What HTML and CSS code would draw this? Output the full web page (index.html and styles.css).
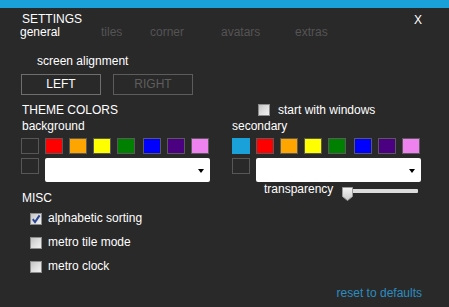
FILE: index.html
```html
<!DOCTYPE html>
<html>
<head>
<meta charset="UTF-8">
<title>Settings</title>
<link rel="stylesheet" href="styles.css">
</head>
<body>
<div class="window">
	<div class="accent"></div>
	<div class="titlebar">
		<span class="title">SETTINGS</span>
		<span class="close">X</span>
	</div>
	<div class="tabs">
		<span class="tab tab-general active">general</span>
		<span class="tab tab-tiles">tiles</span>
		<span class="tab tab-corner">corner</span>
		<span class="tab tab-avatars">avatars</span>
		<span class="tab">extras</span>
	</div>

	<div class="align-label">screen alignment</div>
	<div class="btn-row">
		<button class="btn active">LEFT</button>
		<button class="btn">RIGHT</button>
	</div>

	<div class="columns">
		<div class="col col-left">
			<div class="heading">THEME COLORS</div>
			<div class="sub">background</div>
			<div class="swatches">
				<span class="swatch empty"></span>
				<span class="swatch red"></span>
				<span class="swatch orange"></span>
				<span class="swatch yellow"></span>
				<span class="swatch green"></span>
				<span class="swatch blue"></span>
				<span class="swatch indigo"></span>
				<span class="swatch violet"></span>
			</div>
			<div class="picker-row">
				<span class="swatch empty"></span>
				<div class="select"><span class="arrow"></span></div>
			</div>

			<div class="heading misc">MISC</div>
			<div class="options">
				<div class="option">
					<span class="checkbox checked">
						<svg width="10" height="10" viewBox="0 0 10 10"><path d="M1.8 5.2 L4 8 L8.6 1.4" fill="none" stroke="#2b4596" stroke-width="2"/></svg>
					</span>
					<span>alphabetic sorting</span>
				</div>
				<div class="option"><span class="checkbox"></span><span>metro tile mode</span></div>
				<div class="option"><span class="checkbox"></span><span>metro clock</span></div>
			</div>
		</div>

		<div class="col col-right">
			<div class="check-row"><span class="checkbox"></span><span>start with windows</span></div>
			<div class="sub">secondary</div>
			<div class="swatches">
				<span class="swatch accent-blue"></span>
				<span class="swatch red"></span>
				<span class="swatch orange"></span>
				<span class="swatch yellow"></span>
				<span class="swatch green"></span>
				<span class="swatch blue"></span>
				<span class="swatch indigo"></span>
				<span class="swatch violet"></span>
			</div>
			<div class="picker-row">
				<span class="swatch empty"></span>
				<div class="select"><span class="arrow"></span></div>
			</div>
			<div class="slider-row">
				<span>transparency</span>
				<div class="slider">
					<span class="track"></span>
					<svg class="thumb" width="11" height="14" viewBox="0 0 11 14">
						<defs>
							<linearGradient id="tg" x1="0" y1="0" x2="0" y2="1">
								<stop offset="0" stop-color="#f4f4f4"/>
								<stop offset="1" stop-color="#c9c9c9"/>
							</linearGradient>
						</defs>
						<polygon points="0.5,0.5 10.5,0.5 10.5,9.5 5.5,13.5 0.5,9.5" fill="url(#tg)" stroke="#9a9a9a"/>
					</svg>
				</div>
			</div>
		</div>
	</div>

	<div class="footer"><a class="reset">reset to defaults</a></div>
</div>
</body>
</html>
```

FILE: styles.css
```css
html, body {
	margin: 0;
	padding: 0;
	background-color: #292929;
}
.window {
	width: 449px;
	height: 307px;
	overflow: hidden;
	background-color: #292929;
	color: #ffffff;
	font-family: "Liberation Sans", Arial, sans-serif;
	font-size: 12px;
	line-height: 14px;
}
.accent {
	height: 8px;
	background-color: #1ba1da;
}

/* header */
.titlebar {
	display: flex;
	justify-content: space-between;
	margin-top: 5px;
	padding: 0 27px 0 22px;
	line-height: 12px;
}
.close {
	margin-top: 1px;
}
.tabs {
	display: flex;
	padding-left: 20px;
	line-height: 12px;
	color: #545454;
}
.tab.active {
	color: #ffffff;
}
.tab-general { width: 81px; }
.tab-tiles { width: 49px; }
.tab-corner { width: 71px; }
.tab-avatars { width: 74px; }

/* alignment */
.align-label {
	margin-top: 16px;
	padding-left: 37px;
}
.btn-row {
	display: flex;
	gap: 12px;
	margin-top: 6px;
	padding-left: 21px;
}
.btn {
	width: 80px;
	height: 21px;
	box-sizing: border-box;
	border: 1px solid #5c5c5c;
	background: transparent;
	color: #5e5e5e;
	font-family: inherit;
	font-size: 12px;
	line-height: 19px;
	padding: 0;
}
.btn.active {
	border-color: #6e6e6e;
	color: #ffffff;
}

/* columns */
.columns {
	display: grid;
	grid-template-columns: 189px 189px;
	column-gap: 22px;
	margin-top: 8px;
	padding-left: 21px;
}
.col-left .heading,
.col-left .sub {
	padding-left: 1px;
}
.sub {
	margin-top: 2px;
}
.swatches {
	display: flex;
	gap: 6px;
	margin-top: 5px;
}
.swatch {
	display: block;
	width: 18px;
	height: 16px;
	box-sizing: border-box;
	border: 1px solid #5a5a5a;
}
.swatches .swatch:nth-child(6) {
	margin-left: 2px;
}
.swatch.empty { background-color: #292929; border-color: #575757; }
.swatch.accent-blue { background-color: #1ba1da; border-color: #1ba1da; }
.swatch.red { background-color: #ff0000; }
.swatch.orange { background-color: #ffa500; }
.swatch.yellow { background-color: #ffff00; }
.swatch.green { background-color: #008000; }
.swatch.blue { background-color: #0000ff; }
.swatch.indigo { background-color: #4b0082; }
.swatch.violet { background-color: #ee82ee; }

.picker-row {
	display: flex;
	gap: 6px;
	margin-top: 4px;
}
.select {
	position: relative;
	width: 165px;
	height: 24px;
	background-color: #ffffff;
	border-radius: 2px;
}
.arrow {
	position: absolute;
	right: 6px;
	top: 11px;
	width: 0;
	height: 0;
	border-left: 3.5px solid transparent;
	border-right: 3.5px solid transparent;
	border-top: 4px solid #000000;
}

/* misc */
.misc {
	margin-top: 9px;
}
.options {
	display: flex;
	flex-direction: column;
	gap: 8px;
	margin-top: 5px;
	padding-left: 9px;
}
.option {
	display: flex;
	align-items: flex-start;
	line-height: 16px;
}
.option .checkbox {
	margin-top: 3px;
	margin-right: 6px;
}
.checkbox {
	display: flex;
	align-items: center;
	justify-content: center;
	width: 12px;
	height: 12px;
	box-sizing: border-box;
	border: 1px solid #8c8c8c;
	background: linear-gradient(135deg, #c4c4c4 0%, #dedede 50%, #f2f2f2 100%);
}

/* right column */
.check-row {
	display: flex;
	align-items: center;
	gap: 8px;
	padding-left: 26px;
}
.slider-row {
	display: flex;
	align-items: flex-start;
	padding-left: 32px;
}
.slider {
	position: relative;
	width: 76px;
	height: 14px;
	margin-top: 5px;
	margin-left: 9px;
}
.track {
	display: block;
	margin: 2px 0 0 6px;
	height: 4px;
	background-color: #dcdcdc;
	border-radius: 1px;
}
.thumb {
	position: absolute;
	left: 0;
	top: 0;
}

/* footer */
.footer {
	margin-top: 12px;
	padding-right: 27px;
	text-align: right;
}
.reset {
	color: #2b8dc0;
}
```
